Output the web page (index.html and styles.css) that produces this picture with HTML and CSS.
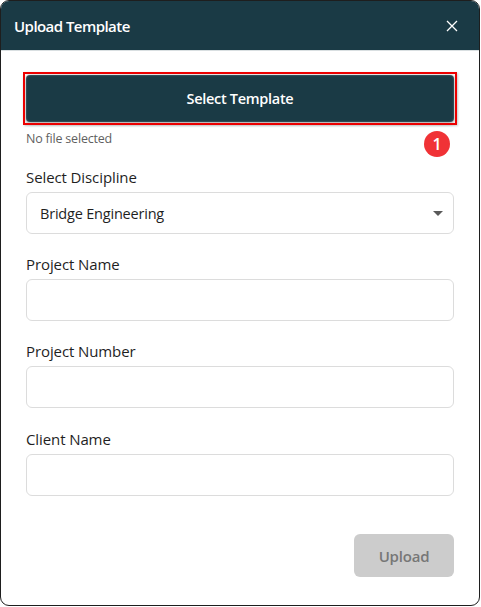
FILE: index.html
```html
<!DOCTYPE html>
<html lang="en">
<head>
<meta charset="utf-8">
<title>Upload Template</title>
<link rel="stylesheet" href="styles.css">
</head>
<body>
<div class="dialog">
  <div class="dialog-header">
    <span class="dialog-title">Upload Template</span>
    <button class="close-btn" aria-label="Close">
      <svg width="12" height="12" viewBox="0 0 12 12"><path d="M1 1 L11 11 M11 1 L1 11" stroke="#ffffff" stroke-width="1.3" fill="none"/></svg>
    </button>
  </div>
  <div class="dialog-body">
    <div class="select-wrap">
      <button class="select-template">Select Template</button>
      <span class="highlight"></span>
      <span class="badge">1</span>
    </div>
    <div class="file-status">No file selected</div>

    <div class="field">
      <label class="field-label">Select Discipline</label>
      <div class="select-box">
        <span>Bridge Engineering</span>
        <span class="caret"></span>
      </div>
    </div>
    <div class="field">
      <label class="field-label">Project Name</label>
      <div class="text-input"></div>
    </div>
    <div class="field">
      <label class="field-label">Project Number</label>
      <div class="text-input"></div>
    </div>
    <div class="field field-last">
      <label class="field-label">Client Name</label>
      <div class="text-input"></div>
    </div>

    <div class="actions">
      <button class="upload-btn" disabled>Upload</button>
    </div>
  </div>
</div>
</body>
</html>
```
FILE: styles.css
```css
* { box-sizing: border-box; }
html, body { margin: 0; padding: 0; background: #ffffff; }
body {
  font-family: "Open Sans", "Noto Sans", sans-serif;
  color: #1f1f1f;
}
.dialog {
  width: 480px;
  height: 606px;
  border: 1px solid #1e1e1e;
  border-radius: 9px;
  overflow: hidden;
  background: #ffffff;
  display: flex;
  flex-direction: column;
}
.dialog-header {
  height: 50px;
  background: #1a3a45;
  border-bottom: 1px solid #d9dfe1;
  display: flex;
  align-items: center;
  justify-content: space-between;
  padding: 0 21px 0 13px;
}
.dialog-title {
  color: #ffffff;
  font-size: 15px;
  font-weight: 600;
  letter-spacing: -0.55px;
}
.close-btn {
  background: none;
  border: 0;
  padding: 0;
  width: 12px;
  height: 12px;
  display: flex;
}
.dialog-body {
  padding: 24px 25px 0 25px;
  display: flex;
  flex-direction: column;
  flex: 1;
}
.select-wrap {
  position: relative;
  height: 47px;
}
.select-template {
  width: 100%;
  height: 47px;
  border: 0;
  border-radius: 4px;
  background: #1a3a45;
  color: #ffffff;
  font-family: inherit;
  font-size: 14.5px;
  font-weight: 600;
  letter-spacing: -0.3px;
  box-shadow: 0 1px 4px rgba(0,0,0,0.45), inset 0 0 2px rgba(255,255,255,0.35);
}
.highlight {
  position: absolute;
  left: -3px;
  top: -3px;
  right: -3px;
  bottom: -3px;
  border: 2px solid #ec0000;
  box-shadow: 1px 1px 2px rgba(0,0,0,0.2);
  pointer-events: none;
}
.badge {
  position: absolute;
  left: 398px;
  top: 56px;
  width: 26px;
  height: 26px;
  border-radius: 50%;
  background: #f03236;
  color: #ffffff;
  font-size: 16px;
  font-weight: 600;
  display: flex;
  align-items: center;
  justify-content: center;
}
.file-status {
  margin-top: 8px;
  font-size: 12.5px;
  line-height: 17px;
  color: #5f5f5f;
  letter-spacing: -0.2px;
}
.field {
  margin-top: 20px;
  display: flex;
  flex-direction: column;
}
.field-last {
  margin-top: 21px;
}
.field-label {
  font-size: 15px;
  line-height: 20px;
  font-weight: 500;
  color: #1f1f1f;
  letter-spacing: -0.1px;
  margin-bottom: 5px;
}
.select-box, .text-input {
  height: 42px;
  border: 1px solid #dcdcdc;
  border-radius: 6px;
  background: #ffffff;
}
.select-box {
  display: flex;
  align-items: center;
  justify-content: space-between;
  padding: 0 10px 0 13px;
  font-size: 14.5px;
  letter-spacing: -0.2px;
  color: #1f1f1f;
}
.caret {
  width: 0;
  height: 0;
  border-left: 5px solid transparent;
  border-right: 5px solid transparent;
  border-top: 5px solid #5a5a5a;
  margin-top: 1px;
}
.actions {
  margin-top: 38px;
  display: flex;
  justify-content: flex-end;
}
.upload-btn {
  width: 100px;
  height: 43px;
  border: 0;
  border-radius: 6px;
  background: #cccccc;
  color: #777777;
  font-family: inherit;
  font-size: 15px;
  font-weight: 600;
  letter-spacing: -0.2px;
}
```
